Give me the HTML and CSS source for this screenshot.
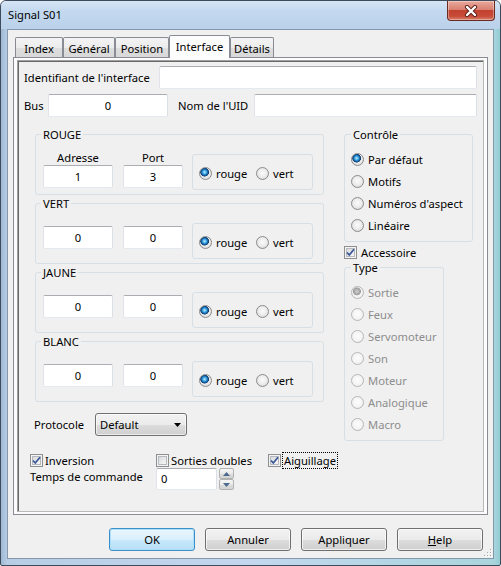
FILE: index.html
```html
<!DOCTYPE html>
<html lang="fr">
<head>
<meta charset="utf-8">
<title>Signal S01</title>
<link rel="stylesheet" href="styles.css">
</head>
<body>
<div class="window">
  <div class="titlebar">
    <span class="title">Signal S01</span>
    <div class="close">
      <svg width="14" height="12" viewBox="0 0 14 12">
        <path d="M3 2 L11 10 M11 2 L3 10" stroke="#5a2119" stroke-width="4.2" stroke-linecap="round"/>
        <path d="M3 2 L11 10 M11 2 L3 10" stroke="#ffffff" stroke-width="2.4" stroke-linecap="round"/>
      </svg>
    </div>
  </div>
  <div class="client">
    <div class="tabs">
      <div class="tab t-index">Index</div>
      <div class="tab t-gen">Général</div>
      <div class="tab t-pos">Position</div>
      <div class="tab t-int active">Interface</div>
      <div class="tab t-det">Détails</div>
    </div>
    <div class="panel">
      <div class="frame">
        <div class="row r1">
          <span class="lbl">Identifiant de l'interface</span>
          <div class="input w-ident"></div>
        </div>
        <div class="row r2">
          <span class="lbl l-bus">Bus</span>
          <div class="input c w-bus">0</div>
          <span class="lbl l-uid">Nom de l'UID</span>
          <div class="input w-uid"></div>
        </div>
        <div class="main">
          <div class="leftcol">
            <div class="group sig">
              <div class="gtitle">ROUGE</div>
              <div class="gbody">
                <div class="fcol first"><div class="flabel">Adresse</div><div class="input c w-adr">1</div></div>
                <div class="fcol first port"><div class="flabel">Port</div><div class="input c w-port">3</div></div>
                <div class="rbox"><span class="ropt"><i class="radio on"></i><span>rouge</span></span><span class="ropt last"><i class="radio"></i><span>vert</span></span></div>
              </div>
            </div>
            <div class="group sig">
              <div class="gtitle">VERT</div>
              <div class="gbody">
                <div class="fcol"><div class="input c w-adr">0</div></div>
                <div class="fcol port"><div class="input c w-port">0</div></div>
                <div class="rbox"><span class="ropt"><i class="radio on"></i><span>rouge</span></span><span class="ropt last"><i class="radio"></i><span>vert</span></span></div>
              </div>
            </div>
            <div class="group sig">
              <div class="gtitle">JAUNE</div>
              <div class="gbody">
                <div class="fcol"><div class="input c w-adr">0</div></div>
                <div class="fcol port"><div class="input c w-port">0</div></div>
                <div class="rbox"><span class="ropt"><i class="radio on"></i><span>rouge</span></span><span class="ropt last"><i class="radio"></i><span>vert</span></span></div>
              </div>
            </div>
            <div class="group sig">
              <div class="gtitle">BLANC</div>
              <div class="gbody">
                <div class="fcol"><div class="input c w-adr">0</div></div>
                <div class="fcol port"><div class="input c w-port">0</div></div>
                <div class="rbox"><span class="ropt"><i class="radio on"></i><span>rouge</span></span><span class="ropt last"><i class="radio"></i><span>vert</span></span></div>
              </div>
            </div>
            <div class="proto">
              <span class="lbl l-proto">Protocole</span>
              <div class="select"><span>Default</span><svg width="7" height="4" viewBox="0 0 7 4"><path d="M0 0 H7 L3.5 4 Z" fill="#000"/></svg></div>
            </div>
          </div>
          <div class="rightcol">
            <div class="group ctrl">
              <div class="gtitle">Contrôle</div>
              <div class="rlist">
                <div class="ritem"><i class="radio on"></i><span>Par défaut</span></div>
                <div class="ritem"><i class="radio"></i><span>Motifs</span></div>
                <div class="ritem"><i class="radio"></i><span>Numéros d'aspect</span></div>
                <div class="ritem"><i class="radio"></i><span>Linéaire</span></div>
              </div>
            </div>
            <div class="acc"><i class="check"><svg width="11" height="11" viewBox="0 0 11 11"><path d="M2 5.5 L4.3 8 L9 2.3" fill="none" stroke="#3b5898" stroke-width="1.8"/></svg></i><span>Accessoire</span></div>
            <div class="group typ">
              <div class="gtitle">Type</div>
              <div class="rlist dis">
                <div class="ritem"><i class="radio don"></i><span>Sortie</span></div>
                <div class="ritem"><i class="radio"></i><span>Feux</span></div>
                <div class="ritem"><i class="radio"></i><span>Servomoteur</span></div>
                <div class="ritem"><i class="radio"></i><span>Son</span></div>
                <div class="ritem"><i class="radio"></i><span>Moteur</span></div>
                <div class="ritem"><i class="radio"></i><span>Analogique</span></div>
                <div class="ritem"><i class="radio"></i><span>Macro</span></div>
              </div>
            </div>
          </div>
        </div>
        <div class="checks">
          <div class="ck ck1"><i class="check"><svg width="11" height="11" viewBox="0 0 11 11"><path d="M2 5.5 L4.3 8 L9 2.3" fill="none" stroke="#3b5898" stroke-width="1.8"/></svg></i><span>Inversion</span></div>
          <div class="ck ck2"><i class="check"></i><span>Sorties doubles</span></div>
          <div class="ck"><i class="check"><svg width="11" height="11" viewBox="0 0 11 11"><path d="M2 5.5 L4.3 8 L9 2.3" fill="none" stroke="#3b5898" stroke-width="1.8"/></svg></i><span class="focus">Aiguillage</span></div>
        </div>
        <div class="temps">
          <span class="lbl l-temps">Temps de commande</span>
          <div class="input w-temps">0</div>
          <div class="spin">
            <div class="sbtn"><svg width="7" height="4" viewBox="0 0 7 4"><path d="M0 4 H7 L3.5 0 Z" fill="#4d6a8f"/></svg></div>
            <div class="sbtn"><svg width="7" height="4" viewBox="0 0 7 4"><path d="M0 0 H7 L3.5 4 Z" fill="#4d6a8f"/></svg></div>
          </div>
        </div>
      </div>
    </div>
    <div class="buttons">
      <div class="btn default">OK</div>
      <div class="btn">Annuler</div>
      <div class="btn">Appliquer</div>
      <div class="btn"><u>H</u>elp</div>
    </div>
    <svg class="grip" width="9" height="9" viewBox="0 0 9 9">
      <g fill="#fff"><rect x="8" y="2" width="1" height="1"/><rect x="8" y="5" width="1" height="1"/><rect x="5" y="5" width="1" height="1"/><rect x="8" y="8" width="1" height="1"/><rect x="5" y="8" width="1" height="1"/><rect x="2" y="8" width="1" height="1"/></g>
      <g fill="#a9a9a9"><rect x="7" y="1" width="1" height="1"/><rect x="7" y="4" width="1" height="1"/><rect x="4" y="4" width="1" height="1"/><rect x="7" y="7" width="1" height="1"/><rect x="4" y="7" width="1" height="1"/><rect x="1" y="7" width="1" height="1"/></g>
    </svg>
  </div>
</div>
</body>
</html>
```
FILE: styles.css
```css
* { box-sizing: border-box; }
html, body { margin: 0; padding: 0; }
body {
  width: 501px;
  height: 566px;
  overflow: hidden;
  font-family: "Noto Sans", "DejaVu Sans", sans-serif;
  font-size: 11.2px;
  color: #000;
  background: #ffffff;
}
.window {
  width: 501px;
  height: 566px;
  border: 1px solid #3e4b5a;
  border-radius: 6px 6px 2px 2px;
  background: linear-gradient(to right, #9fb9d4 0, #b7cde5 6px, #c3d8ee 50%, #a9d5dd 493px, #93ccd4 100%);
  display: flex;
  flex-direction: column;
}
.titlebar {
  height: 28px;
  display: flex;
  align-items: flex-start;
  padding: 0 5px 0 7px;
  border-radius: 5px 5px 0 0;
  background: linear-gradient(#d6e5f5 0, #c4d9ef 35%, #bad1ea 100%);
}
.title {
  line-height: 27px;
}
.close {
  margin-left: auto;
  width: 48px;
  height: 20px;
  border: 1px solid #6a2a22;
  border-top: none;
  border-radius: 0 0 4px 4px;
  background: linear-gradient(#e9a99d 0, #d88170 45%, #c2412f 50%, #c74c38 80%, #d9806a 100%);
  display: flex;
  align-items: center;
  justify-content: center;
  box-shadow: inset 0 0 0 1px rgba(255,255,255,0.35);
}
.client {
  position: relative;
  margin: 0 6px 6px 6px;
  height: 530px;
  border: 1px solid #8597ab;
  background: #f0f0f0;
}
.tabs {
  display: flex;
  align-items: flex-end;
  height: 22px;
  margin: 5px 0 0 7px;
  position: relative;
  z-index: 1;
}
.tab {
  height: 20px;
  border: 1px solid #898c95;
  border-bottom: none;
  border-radius: 2px 2px 0 0;
  background: linear-gradient(#f4f4f4 0, #ececec 50%, #dedede 51%, #d8d8d8 100%);
  text-align: center;
  line-height: 19px;
  padding-top: 1px;
}
.tab.active {
  height: 23px;
  margin-bottom: -1px;
  background: #fcfcfc;
  line-height: 19px;
  padding-top: 1px;
}
.t-index { width: 48px; }
.t-gen { width: 52px; }
.t-pos { width: 54px; }
.t-int { width: 61px; }
.t-det { width: 44px; }
.panel {
  margin: 0 5px;
  height: 458px;
  border: 1px solid #898c95;
  background: #fcfcfc;
  padding: 2px 3px;
}
.frame {
  height: 452px;
  border: 1px solid;
  border-color: #a0a0a0 #b9b9b9 #b9b9b9 #a0a0a0;
  box-shadow: inset 1px 1px 0 #696969;
  background: #f0f0f0;
  padding: 5px 6px 0 6px;
}
.row {
  display: flex;
  align-items: center;
  height: 23px;
}
.r2 { margin-top: 5px; }
.input {
  height: 23px;
  background: #fff;
  border: 1px solid;
  border-color: #abadb3 #dbdfe6 #e3e9ef #e2e3ea;
  border-radius: 2px;
  line-height: 21px;
  padding: 0 4px;
}
.input.c { text-align: center; }
.w-ident { width: 318px; margin-left: auto; }
.l-bus { width: 24px; }
.w-bus { width: 120px; }
.l-uid { margin-left: 10px; }
.w-uid { width: 223px; margin-left: auto; }
.main {
  display: flex;
  margin-top: 17px;
  padding-left: 11px;
}
.leftcol { width: 289px; }
.rightcol { margin-left: 20px; }
.group {
  border: 1px solid #d5dfe5;
  border-radius: 3px;
}
.gtitle {
  width: fit-content;
  height: 15px;
  line-height: 15px;
  margin: -8px 0 0 5px;
  padding: 0 2px;
  background: #f0f0f0;
}
.ctrl .gtitle, .typ .gtitle { margin-left: 6px; }
.sig { height: 61px; width: 289px; }
.sig + .sig { margin-top: 8px; }
.gbody {
  display: flex;
  align-items: flex-start;
  padding-left: 7px;
}
.fcol { margin-top: 15px; }
.fcol.first { margin-top: 8px; }
.fcol.port { margin-left: 10px; }
.flabel {
  height: 15px;
  line-height: 15px;
  text-align: center;
}
.w-adr { width: 70px; height: 23px; }
.w-port { width: 60px; height: 23px; }
.rbox {
  margin: 12px 0 0 9px;
  width: 121px;
  height: 36px;
  border: 1px solid #d5dfe5;
  border-radius: 3px;
  display: flex;
  align-items: center;
  padding: 3px 0 0 6px;
}
.ropt {
  display: flex;
  align-items: center;
  width: 57px;
}
.ropt.last { width: auto; }
.ropt span, .ritem span { margin-left: 4px; }
.radio {
  display: block;
  flex: none;
  width: 13px;
  height: 13px;
  border-radius: 50%;
  border: 1px solid #8c8c8c;
  background: radial-gradient(circle at 50% 45%, #fbfbfb 0, #ececec 50%, #cdcdcd 100%);
}
.radio.on {
  background:
    radial-gradient(circle at 42% 38%, #c8f1ff 0, #5bbcec 1.4px, #1f78bf 2.8px, #0f4f8c 3.6px, #123f6e 4.1px, rgba(18,63,110,0) 4.6px),
    radial-gradient(circle at 50% 45%, #fbfbfb 0, #ececec 50%, #cdcdcd 100%);
}
.dis { color: #8d8d8d; }
.dis .radio {
  border-color: #b7b7b7;
  background: radial-gradient(circle at 50% 45%, #fdfdfd 0, #f3f3f3 60%, #e3e3e3 100%);
}
.dis .radio.don {
  background:
    radial-gradient(circle at 45% 40%, #d0d0d0 0, #acacac 2.6px, #9a9a9a 3.6px, rgba(160,160,160,0) 4.3px),
    radial-gradient(circle at 50% 45%, #fdfdfd 0, #f3f3f3 60%, #e3e3e3 100%);
}
.ctrl { width: 129px; height: 108px; }
.typ { width: 100px; height: 174px; }
.rlist {
  margin-top: 6px;
  padding-left: 6px;
}
.ritem {
  display: flex;
  align-items: center;
  height: 22px;
}
.acc {
  display: flex;
  align-items: center;
  height: 16px;
  margin-top: 2px;
}
.acc span { margin-left: 4px; }
.typ { margin-top: 7px; }
.check {
  display: flex;
  align-items: center;
  justify-content: center;
  flex: none;
  width: 13px;
  height: 13px;
  border: 1px solid #8e8f8f;
  background: linear-gradient(135deg, #cfd1d5 0, #eeeeee 60%, #fafafa 100%);
  box-shadow: inset 0 0 0 1px #f4f4f4, inset 0 0 0 2px #b5b8bd;
}
.proto {
  display: flex;
  align-items: center;
  height: 23px;
  margin-top: 11px;
}
.l-proto { width: 61px; margin-left: -1px; }
.select {
  width: 92px;
  height: 23px;
  border: 1px solid #707070;
  border-radius: 3px;
  background: linear-gradient(#f2f2f2 0, #ebebeb 50%, #dddddd 51%, #cfcfcf 100%);
  box-shadow: inset 0 0 0 1px rgba(255,255,255,0.6);
  display: flex;
  align-items: center;
  justify-content: space-between;
  padding: 0 5px 0 4px;
}
.checks {
  display: flex;
  align-items: center;
  height: 16px;
  margin-top: 11px;
  padding-left: 6px;
}
.ck { display: flex; align-items: center; }
.ck span { margin-left: 2px; }
.ck1 { width: 126px; }
.ck2 { width: 112px; }
.focus {
  outline: 1px dotted #000;
  outline-offset: 0;
  padding: 0 1px;
  line-height: 15px;
}
.temps {
  display: flex;
  align-items: flex-start;
  height: 22px;
  padding-left: 6px;
}
.l-temps { width: 126px; line-height: 17px; }
.w-temps { width: 61px; height: 22px; line-height: 20px; padding-left: 4px; }
.spin { margin-left: 2px; display: flex; flex-direction: column; }
.sbtn {
  width: 15px;
  height: 11px;
  border: 1px solid #b2b2b2;
  border-radius: 2px;
  background: linear-gradient(#f6f6f6 0, #e9e9e9 50%, #dcdcdc 51%, #d4d4d4 100%);
  display: flex;
  align-items: center;
  justify-content: center;
}
.buttons {
  display: flex;
  justify-content: flex-end;
  gap: 10px;
  margin-top: 13px;
  padding-right: 10px;
}
.btn {
  width: 86px;
  height: 23px;
  border: 1px solid #707070;
  border-radius: 3px;
  background: linear-gradient(#f2f2f2 0, #ebebeb 50%, #dddddd 51%, #cfcfcf 100%);
  box-shadow: inset 0 0 0 1px rgba(255,255,255,0.7);
  text-align: center;
  line-height: 21px;
}
.btn.default {
  border-color: #3c8fc8;
  background: linear-gradient(#eaf6fd 0, #d9f0fc 50%, #c7e8fb 51%, #b8e0f6 100%);
  box-shadow: inset 0 0 0 1px #aee0fa;
}
.grip {
  position: absolute;
  right: 1px;
  bottom: 1px;
}
```
